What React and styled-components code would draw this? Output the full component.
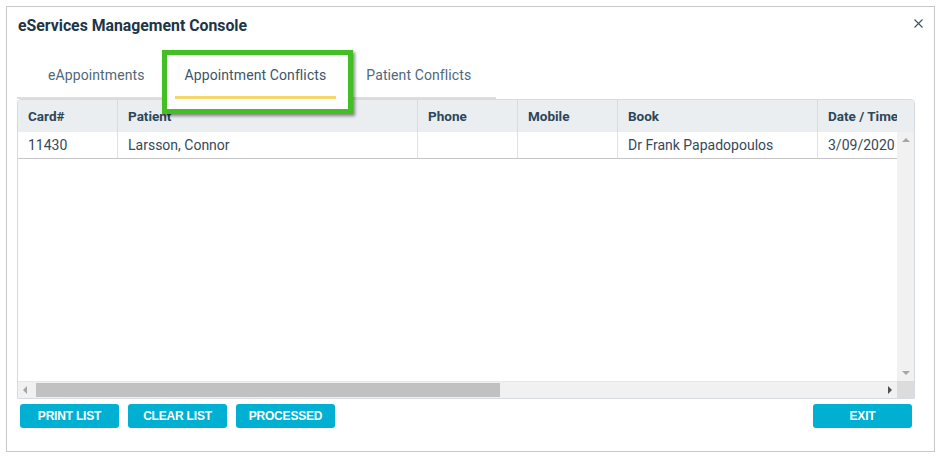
import React from "react";
import styled, { createGlobalStyle } from "styled-components";

const Global = createGlobalStyle`
  html, body { margin: 0; padding: 0; background: #fff; }
  body { font-family: Roboto, "Liberation Sans", Arial, sans-serif; }
  * { box-sizing: border-box; }
`;

const Dialog = styled.div`
  position: relative;
  margin: 6px;
  width: 929px;
  height: 446px;
  border: 1px solid #c9c9c9;
  display: flex;
  flex-direction: column;
  padding: 0 18px 0 10px;
`;

const TitleRow = styled.div`
  display: flex;
  justify-content: space-between;
  align-items: center;
  padding-top: 9px;
  margin-left: 1px;
  margin-right: -8px;
  height: 28px;
`;

const Title = styled.div`
  font-size: 15.8px;
  font-weight: 700;
  line-height: 18px;
  color: #1d3547;
`;

const Close = styled.button`
  border: 0;
  background: none;
  padding: 0;
  width: 12px;
  height: 12px;
  display: flex;
  align-items: center;
  justify-content: center;
  margin-top: -5px;
`;

const TabBar = styled.div`
  display: flex;
  width: 479px;
  padding-left: 21px;
  gap: 20px;
  border-bottom: 2px solid #dddddd;
`;

const Tab = styled.div`
  position: relative;
  z-index: 2;
  padding: 30px 10px 11px;
  font-size: 14px;
  letter-spacing: 0.1px;
  line-height: 20px;
  color: ${(p) => (p.$active ? "#3c5568" : "#4f687b")};
  border-bottom: 3px solid ${(p) => (p.$active ? "#f7d56b" : "transparent")};
  margin-bottom: -2px;
  white-space: nowrap;
`;

const Highlight = styled.div`
  position: absolute;
  z-index: 1;
  left: 155px;
  top: 43px;
  width: 191px;
  height: 64px;
  border: 5px solid #42c023;
  background: #fff;
  box-shadow: 2px 2px 3px rgba(0, 0, 0, 0.45);
`;

const Table = styled.div`
  width: 898px;
  height: 300px;
  border: 1px solid #d6dbdf;
  border-radius: 4px 4px 0 0;
  display: grid;
  grid-template-columns: 879px 17px;
  grid-template-rows: 32px 249px 17px;
  overflow: hidden;
`;

const Header = styled.div`
  display: flex;
  background: #eaeef1;
  overflow: hidden;
`;

const HeaderFill = styled.div`
  background: #eaeef1;
`;

const HCell = styled.div`
  flex: 0 0 ${(p) => p.$w}px;
  padding-left: 10px;
  font-size: 13.5px;
  font-weight: 700;
  color: #2d4659;
  line-height: 32px;
  border-right: 1px solid #d7dce0;
  white-space: nowrap;
`;

const Body = styled.div`
  overflow: hidden;
  background: #fff;
`;

const Row = styled.div`
  display: flex;
  height: 27px;
  border-bottom: 1px solid #c6c6c6;
  width: 960px;
`;

const Cell = styled.div`
  flex: 0 0 ${(p) => p.$w}px;
  padding-left: 10px;
  font-size: 14px;
  color: #34495a;
  line-height: 26px;
  border-right: 1px solid #e2e2e2;
  white-space: nowrap;
`;

const VScroll = styled.div`
  background: #f1f1f1;
  display: flex;
  flex-direction: column;
  justify-content: space-between;
  align-items: center;
  padding: 6px 0 6px;
`;

const HScroll = styled.div`
  background: #f1f1f1;
  display: flex;
  align-items: center;
  padding: 0 5px 0 5px;
  border-top: 1px solid #e6e6e6;
`;

const Thumb = styled.div`
  width: 464px;
  height: 14px;
  background: #c1c1c1;
  margin-left: 9px;
`;

const Spacer = styled.div`
  flex: 1;
`;

const Corner = styled.div`
  background: #dcdcdc;
`;

const ButtonRow = styled.div`
  display: flex;
  gap: 9px;
  margin: 5px 4px 0 3px;
`;

const Button = styled.button`
  width: 99px;
  height: 24px;
  border: 0;
  border-radius: 3px;
  background: #00b0d3;
  color: #fff;
  font-family: "Liberation Sans", Arial, sans-serif;
  font-weight: 700;
  font-size: 12px;
  letter-spacing: -0.2px;
  padding: 0;
  margin-left: ${(p) => (p.$right ? "auto" : "0")};
`;

const cols = [100, 300, 100, 100, 200, 160];

const Arrow = ({ dir, color }) => {
  const pts = {
    up: "0,4 4,0 8,4",
    down: "0,0 8,0 4,4",
    left: "4,0 4,8 0,4",
    right: "0,0 0,8 4,4",
  }[dir];
  const vertical = dir === "up" || dir === "down";
  return (
    <svg width={vertical ? 8 : 4} height={vertical ? 4 : 8} viewBox={vertical ? "0 0 8 4" : "0 0 4 8"}>
      <polygon points={pts} fill={color} />
    </svg>
  );
};

export default function App() {
  return (
    <>
      <Global />
      <Dialog>
        <TitleRow>
          <Title>eServices Management Console</Title>
          <Close aria-label="close">
            <svg width="9" height="9" viewBox="0 0 9 9">
              <path d="M0.5 0.5 L8.5 8.5 M8.5 0.5 L0.5 8.5" stroke="#3d5466" strokeWidth="1.1" />
            </svg>
          </Close>
        </TitleRow>
        <Highlight />
        <TabBar>
          <Tab>eAppointments</Tab>
          <Tab $active>Appointment Conflicts</Tab>
          <Tab>Patient Conflicts</Tab>
        </TabBar>
        <Table>
          <Header>
            {["Card#", "Patient", "Phone", "Mobile", "Book", "Date / Time"].map((h, i) => (
              <HCell key={h} $w={cols[i]}>{h}</HCell>
            ))}
          </Header>
          <HeaderFill />
          <Body>
            <Row>
              {["11430", "Larsson, Connor", "", "", "Dr Frank Papadopoulos", "3/09/2020"].map((c, i) => (
                <Cell key={i} $w={cols[i]}>{c}</Cell>
              ))}
            </Row>
          </Body>
          <VScroll>
            <Arrow dir="up" color="#a6a6a6" />
            <Arrow dir="down" color="#a6a6a6" />
          </VScroll>
          <HScroll>
            <Arrow dir="left" color="#a6a6a6" />
            <Thumb />
            <Spacer />
            <Arrow dir="right" color="#505050" />
          </HScroll>
          <Corner />
        </Table>
        <ButtonRow>
          <Button>PRINT LIST</Button>
          <Button>CLEAR LIST</Button>
          <Button>PROCESSED</Button>
          <Button $right>EXIT</Button>
        </ButtonRow>
      </Dialog>
    </>
  );
}
